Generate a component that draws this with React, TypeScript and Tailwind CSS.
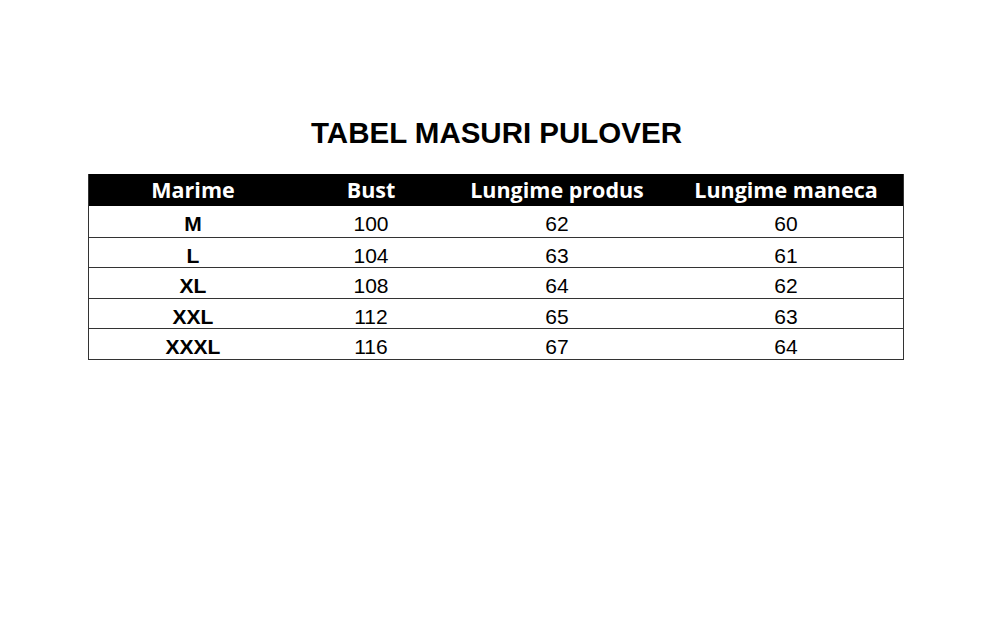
import React from 'react'

const rows = [
  ['M', '100', '62', '60'],
  ['L', '104', '63', '61'],
  ['XL', '108', '64', '62'],
  ['XXL', '112', '65', '63'],
  ['XXXL', '116', '67', '64'],
]

const headers = ['Marime', 'Bust', 'Lungime produs', 'Lungime maneca']

export default function App() {
  return (
    <div className="w-[1000px] h-[642px] bg-white flex flex-col items-center pt-[115px]">
      <h1 className="font-['Liberation_Sans',Arial,sans-serif] font-bold text-[29.5px] leading-[36px] text-black ml-[-7px]">
        TABEL MASURI PULOVER
      </h1>
      <div className="mt-[23px] w-[816px] ml-[-8px] border border-[#333] border-t-0">
        <div className="grid grid-cols-[208px_148px_224px_234px] bg-black h-[32px] items-center">
          {headers.map(h => (
            <div key={h} className="text-center text-white font-['Open_Sans','Noto_Sans',sans-serif] font-bold text-[21.5px] leading-[32px]">
              {h}
            </div>
          ))}
        </div>
        {rows.map((r, i) => (
          <div
            key={r[0]}
            className={`grid grid-cols-[208px_148px_224px_234px] h-[30.6px] items-center ${i > 0 ? 'border-t-[1.5px] border-[#333]' : ''}`}
          >
            {r.map((c, j) => (
              <div
                key={j}
                className={`text-center text-black font-['Liberation_Sans',Arial,sans-serif] text-[21px] leading-[30px] pt-[3px] ${j === 0 ? 'font-bold' : ''}`}
              >
                {c}
              </div>
            ))}
          </div>
        ))}
      </div>
    </div>
  )
}
